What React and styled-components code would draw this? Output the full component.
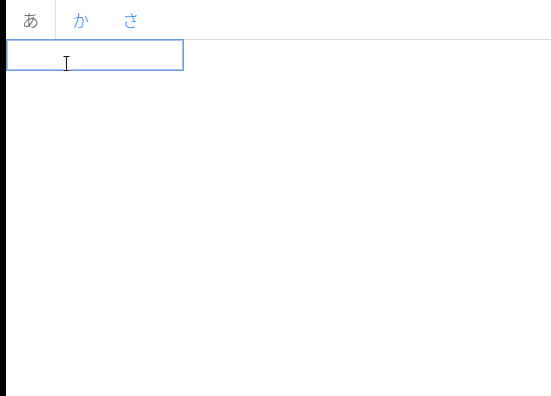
import React, { useState } from "react";
import styled, { createGlobalStyle } from "styled-components";

const GlobalStyle = createGlobalStyle`
  html, body {
    margin: 0;
    padding: 0;
    background: #fff;
    font-family: "Noto Sans CJK JP", "Noto Sans", sans-serif;
  }
`;

const tabs = ["あ", "か", "さ"];

const App = () => {
  const [active, setActive] = useState(0);

  return (
    <Page>
      <GlobalStyle />
      <Edge />
      <Main>
        <TabBar>
          {tabs.map((t, i) => (
            <Tab key={t} $active={i === active} onClick={() => setActive(i)}>
              {t}
            </Tab>
          ))}
          <Filler />
        </TabBar>
        <Field>
          <Input type="text" />
          <Cursor width="7" height="15" viewBox="0 0 7 15">
            <path d="M0.5 0.5h6M3.5 0.5v14M0.5 14.5h6" stroke="#fff" strokeWidth="2.5" fill="none" />
            <path d="M0.5 0.5h6M3.5 0.5v14M0.5 14.5h6" stroke="#111" strokeWidth="1" fill="none" />
          </Cursor>
        </Field>
      </Main>
    </Page>
  );
};

export default App;

const Page = styled.div`
  display: flex;
  width: 551px;
  height: 396px;
  overflow: hidden;
`;

const Edge = styled.div`
  width: 6px;
  flex: none;
  background: #000;
`;

const Main = styled.div`
  flex: 1;
  display: flex;
  flex-direction: column;
`;

const TabBar = styled.div`
  display: flex;
  height: 40px;
`;

const Tab = styled.div`
  width: 50px;
  display: flex;
  align-items: center;
  justify-content: center;
  font-size: 17px;
  font-weight: 300;
  color: ${(p) => (p.$active ? "#555" : "#2a80ea")};
  border-right: 1px solid ${(p) => (p.$active ? "#e2e2e2" : "transparent")};
  border-bottom: 1px solid ${(p) => (p.$active ? "transparent" : "#dcdcdc")};
  padding-bottom: 1px;
  box-sizing: border-box;
  cursor: pointer;
`;

const Filler = styled.div`
  flex: 1;
  border-bottom: 1px solid #dcdcdc;
`;

const Field = styled.div`
  position: relative;
  margin-top: -1px;
  width: 178px;
`;

const Input = styled.input`
  box-sizing: border-box;
  width: 178px;
  height: 32px;
  margin: 0;
  border: 1px solid #6e9ae8;
  box-shadow: inset 0 0 0 1px #a9c3f2;
  outline: none;
  padding: 0 6px;
  font-size: 14px;
`;

const Cursor = styled.svg`
  position: absolute;
  left: 57px;
  top: 17px;
  pointer-events: none;
`;
